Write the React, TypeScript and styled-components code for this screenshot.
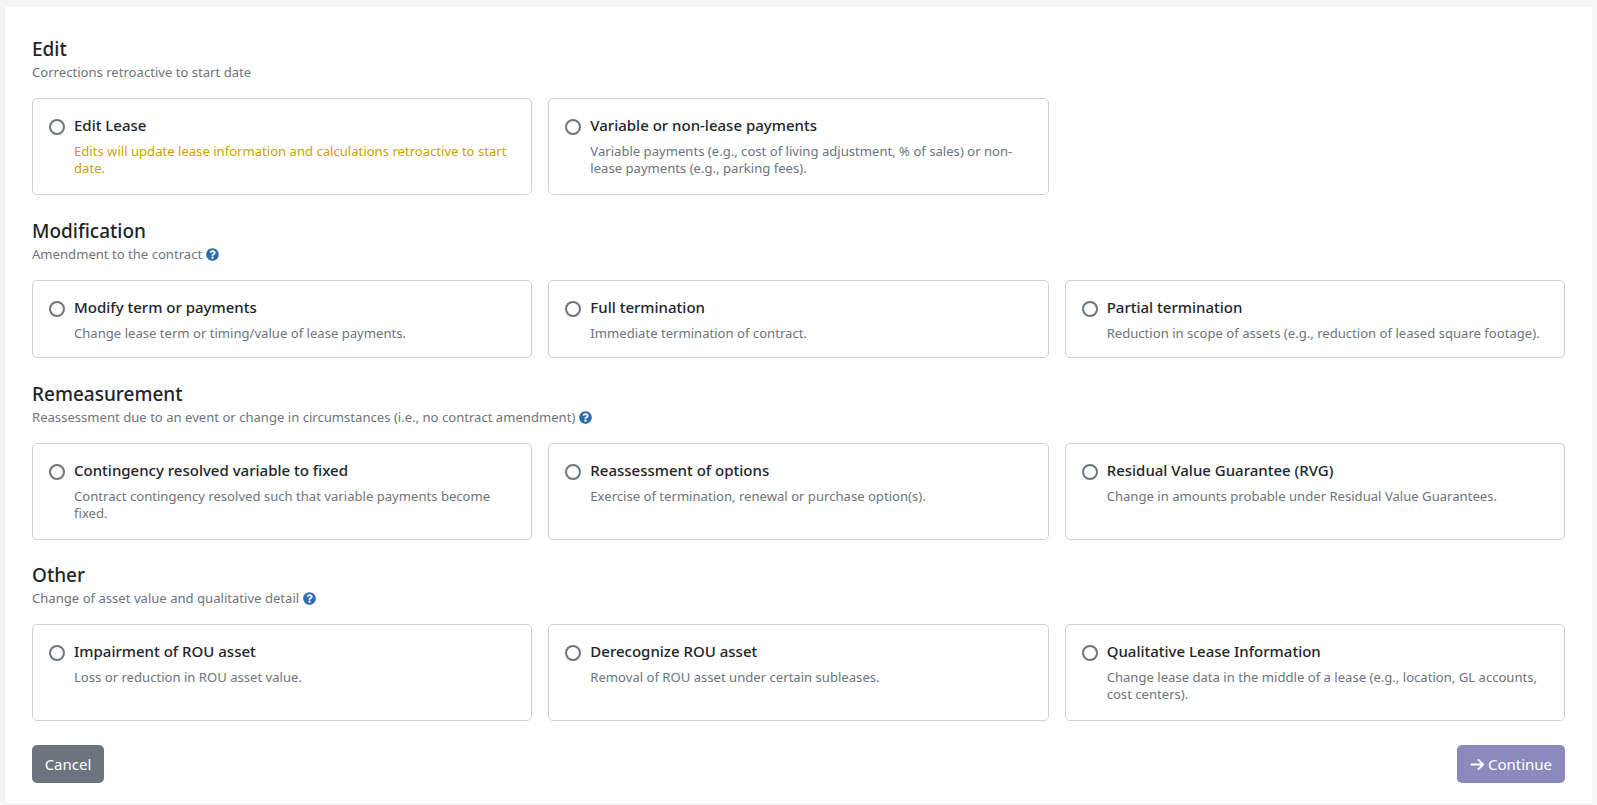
import React from "react";
import styled, { createGlobalStyle } from "styled-components";

const Global = createGlobalStyle`
  html, body { margin: 0; padding: 0; background: #f5f5f5; }
  body { font-family: "Noto Sans", "Open Sans", sans-serif; color: #212529; }
`;
const Page = styled.div`
  box-sizing: border-box;
  height: 805px;
  padding: 7px 5px 2px;
`;
const Panel = styled.main`
  box-sizing: border-box;
  height: 796px;
  background: #fff;
  padding: 29px 27px 20px 27px;
  display: flex;
  flex-direction: column;
`;
const Section = styled.section`
  margin-bottom: 23px;
  &:nth-of-type(3) { margin-bottom: 22px; }
  &:nth-of-type(4) { margin-bottom: 24px; }
`;
const Heading = styled.h2`
  margin: 0;
  font-size: 19px;
  font-weight: 500;
  line-height: 27px;
  color: #212529;
`;
const Sub = styled.p`
  margin: 0 0 17px;
  font-size: 13.1px;
  line-height: 18px;
  color: #6c757d;
  display: flex;
  align-items: center;
  gap: 4px;
`;
const Grid = styled.div`
  display: grid;
  grid-template-columns: repeat(3, 1fr);
  gap: 16px;
`;
const Card = styled.label<{ $h: number }>`
  box-sizing: border-box;
  border: 1px solid #d0d0d0;
  border-radius: 5px;
  padding: 16px 16px 14px;
  display: flex;
  gap: 9px;
  min-height: ${(p) => p.$h}px;
`;
const Radio = styled.span`
  box-sizing: border-box;
  flex: none;
  width: 16px;
  height: 16px;
  margin-top: 4px;
  border: 2px solid #6c757d;
  border-radius: 50%;
`;
const Body = styled.div`
  display: flex;
  flex-direction: column;
  gap: 7px;
`;
const Title = styled.div`
  font-size: 15px;
  font-weight: 500;
  line-height: 21px;
  color: #212529;
`;
const Desc = styled.div<{ $warn?: boolean }>`
  font-size: 13.1px;
  line-height: 17px;
  color: ${(p) => (p.$warn ? "#d39e00" : "#6c757d")};
`;
const Footer = styled.div`
  display: flex;
  justify-content: space-between;
`;
const Button = styled.button<{ $primary?: boolean }>`
  box-sizing: border-box;
  height: 38px;
  width: ${(p) => (p.$primary ? 108 : 72)}px;
  border: none;
  border-radius: 5px;
  color: #fff;
  background: ${(p) => (p.$primary ? "#8a8abd" : "#6c757d")};
  font-family: inherit;
  font-size: 15px;
  display: flex;
  align-items: center;
  justify-content: center;
  gap: 3px;
  padding: 0;
`;
const Help = () => (
  <svg width="13" height="13" viewBox="0 0 512 512" aria-hidden="true">
    <path
      fill="#2b6cb0"
      d="M504 256c0 137-111 248-248 248S8 393 8 256 119 8 256 8s248 111 248 248zM263 90c-54 0-89 23-116 63-4 5-3 12 3 16l35 26c5 4 13 3 17-2 18-23 30-36 57-36 20 0 45 13 45 32 0 15-12 22-32 33-23 13-54 29-54 70v6c0 7 5 12 12 12h56c7 0 12-5 12-12v-2c0-29 83-30 83-107 0-58-60-99-118-99zm-7 244c-25 0-46 21-46 46s21 46 46 46 46-21 46-46-21-46-46-46z"
    />
  </svg>
);

type Item = { t: string; d: string; warn?: boolean };
type Sec = { h: string; s: string; help?: boolean; card: number; items: Item[] };
const data: Sec[] = [
  {
    h: "Edit",
    s: "Corrections retroactive to start date",
    card: 97,
    items: [
      { t: "Edit Lease", d: "Edits will update lease information and calculations retroactive to start date.", warn: true },
      { t: "Variable or non-lease payments", d: "Variable payments (e.g., cost of living adjustment, % of sales) or non-lease payments (e.g., parking fees)." },
    ],
  },
  {
    h: "Modification",
    s: "Amendment to the contract",
    help: true,
    card: 78,
    items: [
      { t: "Modify term or payments", d: "Change lease term or timing/value of lease payments." },
      { t: "Full termination", d: "Immediate termination of contract." },
      { t: "Partial termination", d: "Reduction in scope of assets (e.g., reduction of leased square footage)." },
    ],
  },
  {
    h: "Remeasurement",
    s: "Reassessment due to an event or change in circumstances (i.e., no contract amendment)",
    help: true,
    card: 97,
    items: [
      { t: "Contingency resolved variable to fixed", d: "Contract contingency resolved such that variable payments become fixed." },
      { t: "Reassessment of options", d: "Exercise of termination, renewal or purchase option(s)." },
      { t: "Residual Value Guarantee (RVG)", d: "Change in amounts probable under Residual Value Guarantees." },
    ],
  },
  {
    h: "Other",
    s: "Change of asset value and qualitative detail",
    help: true,
    card: 97,
    items: [
      { t: "Impairment of ROU asset", d: "Loss or reduction in ROU asset value." },
      { t: "Derecognize ROU asset", d: "Removal of ROU asset under certain subleases." },
      { t: "Qualitative Lease Information", d: "Change lease data in the middle of a lease (e.g., location, GL accounts, cost centers)." },
    ],
  },
];

export default function App() {
  return (
    <Page>
      <Global />
      <Panel>
        {data.map((sec) => (
          <Section key={sec.h}>
            <Heading>{sec.h}</Heading>
            <Sub>
              {sec.s}
              {sec.help && <Help />}
            </Sub>
            <Grid>
              {sec.items.map((it) => (
                <Card key={it.t} $h={sec.card}>
                  <Radio />
                  <Body>
                    <Title>{it.t}</Title>
                    <Desc $warn={it.warn}>{it.d}</Desc>
                  </Body>
                </Card>
              ))}
            </Grid>
          </Section>
        ))}
        <Footer>
          <Button>Cancel</Button>
          <Button $primary>
            <svg width="15" height="15" viewBox="0 0 16 16" fill="none" stroke="#fff" strokeWidth="2" strokeLinecap="round" strokeLinejoin="round" aria-hidden="true">
              <path d="M1.5 8h12.5M9 3l5 5-5 5" />
            </svg>
            Continue
          </Button>
        </Footer>
      </Panel>
    </Page>
  );
}
